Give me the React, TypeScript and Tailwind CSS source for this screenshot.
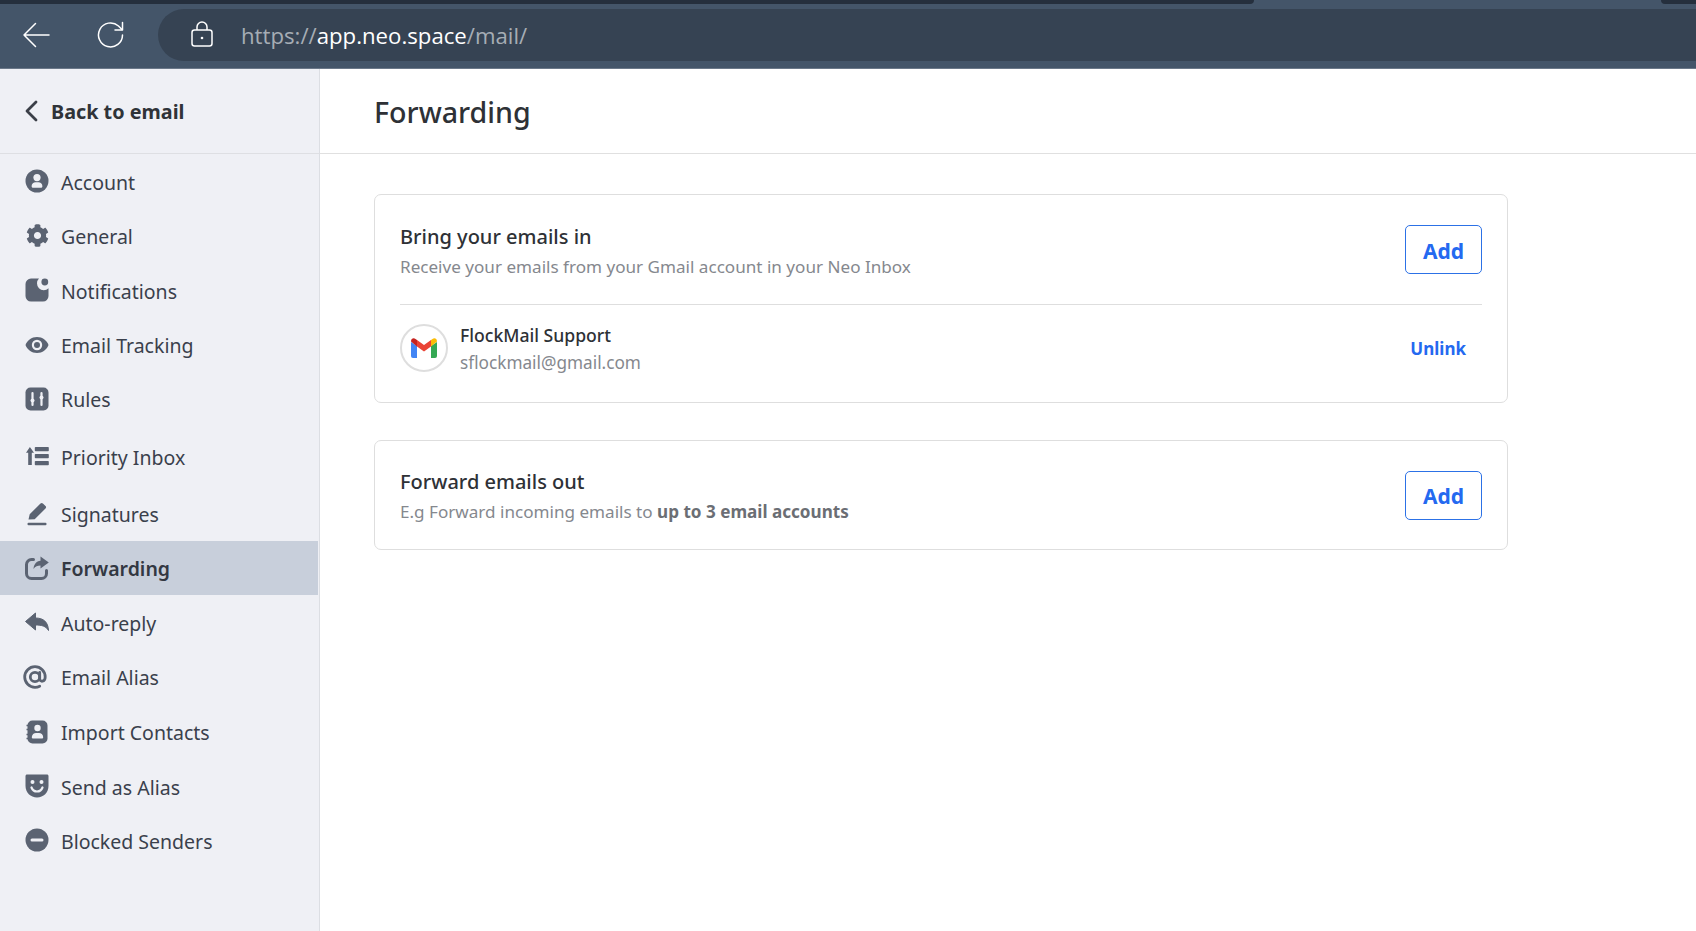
import type { ReactNode } from "react";
import { FaCog } from "react-icons/fa";

const iconColor = "#5b6372";
const sideBg = "#eff0f5";

function Glyph({ children }: { children: ReactNode }) {
  return (
    <svg viewBox="0 0 24 24" className="w-[24px] h-[24px] shrink-0 mb-[3px]" fill={iconColor}>
      {children}
    </svg>
  );
}

const AccountIcon = () => (
  <Glyph>
    <circle cx="12" cy="12" r="11.5" />
    <circle cx="12" cy="8.6" r="3.6" fill={sideBg} />
    <path d="M6.6 17.2c0-2.6 2-4 4-4h2.8c2 0 4 1.4 4 4 0 .9-.8 1.6-1.6 1.6H8.2c-.8 0-1.6-.7-1.6-1.6z" fill={sideBg} />
  </Glyph>
);

const GearIcon = () => (
  <span className="w-[24px] h-[24px] shrink-0 mb-[3px] flex items-center justify-center text-[#5b6372]">
    <FaCog size={23} />
  </span>
);

const BellIcon = () => (
  <Glyph>
    <path d="M14 .6H6A5.5 5.5 0 0 0 .5 6.100v12A5.5 5.500 0 0 0 6 23.600h12a5.500 5.500 0 0 0 5.500-5.500V10.200A6.600 6.600 0 0 1 14 .6z" />
    <circle cx="19.800" cy="4" r="3.400" />
  </Glyph>
);

const EyeIcon = () => (
  <Glyph>
    <path d="M12 4C6.500 4 2.300 7.500.5 12c1.800 4.500 6 8 11.500 8s9.700-3.500 11.500-8C21.700 7.500 17.500 4 12 4z" />
    <circle cx="12" cy="12" r="5.200" fill={sideBg} />
    <circle cx="12" cy="12" r="3" />
  </Glyph>
);

const RulesIcon = () => (
  <Glyph>
    <rect x=".5" y=".5" width="23" height="23" rx="5" />
    <path d="M7.500 11.500V6M7.500 18v-2.500M16.500 18v-5.500M16.500 8.500V6" stroke={sideBg} strokeWidth="2.200" strokeLinecap="round" />
    <circle cx="7.500" cy="13.500" r="2" fill={sideBg} />
    <circle cx="16.500" cy="10.500" r="2" fill={sideBg} />
  </Glyph>
);

const PriorityIcon = () => (
  <Glyph>
    <path d="M4.900 3 9 8.700H6.800V21H3.200V8.700H1z" />
    <rect x="9.800" y="3" width="14" height="4.200" rx=".8" />
    <rect x="9.800" y="10" width="14" height="4.200" rx=".8" />
    <rect x="9.800" y="17" width="14" height="4.200" rx=".8" />
  </Glyph>
);

const PenIcon = () => (
  <Glyph>
    <path d="M3.500 17.500 4.700 12.200 15.500 1.500a1.700 1.700 0 0 1 2.400 0l2.600 2.600a1.700 1.700 0 0 1 0 2.400L9.700 17.300z" />
    <rect x="2.500" y="20.800" width="19" height="2.500" rx="1" />
  </Glyph>
);

const ForwardIcon = () => (
  <Glyph>
    <path d="M8.500 3.500H6.500a5 5 0 0 0-5 5v9a5 5 0 0 0 5 5h10a5 5 0 0 0 5-5v-3" fill="none" stroke={iconColor} strokeWidth="3" strokeLinecap="round" />
    <path d="M15.500.6 23.800 6.500 15.500 12.500V9.500c-3 0-5.200.9-7 3.500.4-4.800 2.800-7.700 7-8.300z" />
  </Glyph>
);

const ReplyIcon = () => (
  <Glyph>
    <path d="M.5 11.500 10.500 3v5c8 0 12.600 4 13 12.500-2.500-4.300-6.500-5.500-13-5.500v5z" stroke={iconColor} strokeWidth="1" strokeLinejoin="round" />
  </Glyph>
);

const AtIcon = () => (
  <svg viewBox="0 0 24 24" className="w-[24px] h-[24px] shrink-0 mb-[3px] -ml-[2px] mr-[2px]" fill="none" stroke={iconColor} strokeWidth="2.800" strokeLinecap="round">
    <circle cx="12" cy="12" r="4.700" />
    <path d="M16.700 7.500v6.300c0 3.600 5.500 3.400 5.500-1.800C22.200 6.400 17.700 1.700 12 1.700 6.300 1.700 1.700 6.300 1.700 12S6.300 22.300 12 22.300c1.800 0 3.300-.4 4.700-1.100" />
  </svg>
);

const ContactsIcon = () => (
  <Glyph>
    <rect x="2.500" y=".5" width="20" height="23" rx="5" />
    <path d="M1.500 5.500h2M1.500 9.500h2M1.500 14.500h2M1.500 18.500h2" stroke={iconColor} strokeWidth="1.400" />
    <circle cx="12.500" cy="8" r="3.200" fill={sideBg} />
    <path d="M6.800 17.200c0-2.800 2.200-4.300 4.200-4.300h3c2 0 4.200 1.500 4.200 4.300 0 .7-.6 1.300-1.300 1.300H8.100c-.7 0-1.300-.6-1.300-1.300z" fill={sideBg} />
  </Glyph>
);

const AliasIcon = () => (
  <Glyph>
    <path d="M2 .6h20c.8 0 1.500.7 1.500 1.500V12c0 6.500-5 11.500-11.500 11.500S.5 18.500.5 12V2.100C.5 1.300 1.200.6 2 .6z" />
    <circle cx="7.500" cy="8" r="2" fill={sideBg} />
    <circle cx="16.500" cy="8" r="2" fill={sideBg} />
    <path d="M6.500 13.500c1 2.600 3 4 5.500 4s4.500-1.400 5.500-4" fill="none" stroke={sideBg} strokeWidth="2.200" strokeLinecap="round" />
  </Glyph>
);

const BlockedIcon = () => (
  <Glyph>
    <circle cx="12" cy="12" r="11.500" />
    <rect x="5.500" y="10.500" width="13" height="3" rx="1.500" fill={sideBg} />
  </Glyph>
);

const navItems = [
  { label: "Account", icon: <AccountIcon />, h: "h-[55px]" },
  { label: "General", icon: <GearIcon />, h: "h-[54px]" },
  { label: "Notifications", icon: <BellIcon />, h: "h-[55px]" },
  { label: "Email Tracking", icon: <EyeIcon />, h: "h-[54px]" },
  { label: "Rules", icon: <RulesIcon />, h: "h-[54px]" },
  { label: "Priority Inbox", icon: <PriorityIcon />, h: "h-[61px]" },
  { label: "Signatures", icon: <PenIcon />, h: "h-[54px]" },
  { label: "Forwarding", icon: <ForwardIcon />, h: "h-[54px]", active: true },
  { label: "Auto-reply", icon: <ReplyIcon />, h: "h-[55px]" },
  { label: "Email Alias", icon: <AtIcon />, h: "h-[54px]" },
  { label: "Import Contacts", icon: <ContactsIcon />, h: "h-[56px]" },
  { label: "Send as Alias", icon: <AliasIcon />, h: "h-[53px]" },
  { label: "Blocked Senders", icon: <BlockedIcon />, h: "h-[55px]" },
];

function BrowserBar() {
  return (
    <div className="relative h-[69px] bg-[#445569] border-b border-[#6b7889] flex items-center pl-[22px] pt-[2px]">
      {/* strip of the tab row above the toolbar */}
      <div className="absolute left-0 top-0 w-[1254px] h-[4px] bg-[#252f3d] rounded-br-[4px]" />
      <div className="absolute right-0 top-0 w-[35px] h-[4px] bg-[#252f3d] rounded-bl-[4px]" />
      <svg viewBox="0 0 28 26" className="w-[28px] h-[26px] shrink-0" fill="none" stroke="#fff" strokeWidth="1.500" strokeLinecap="round" strokeLinejoin="round">
        <path d="M27 13H2M13.500 1.500 2 13l11.500 11.500" />
      </svg>
      <svg viewBox="0 0 28 28" className="w-[28px] h-[28px] shrink-0 ml-[47px]" fill="none" stroke="#fff" strokeWidth="1.500" strokeLinecap="round" strokeLinejoin="round">
        <path d="M25.500 14A12 12 0 1 1 21.500 5l3.500 3.500" />
        <path d="M25.500 1.500v7.500H18" />
      </svg>
      <div className="ml-[33px] flex-1 h-[52px] bg-[#364353] rounded-l-[26px] flex items-center pl-[33px]">
        <svg viewBox="0 0 22 26" className="w-[22px] h-[26px] shrink-0 mb-[2px]" fill="none" stroke="#fff" strokeWidth="1.500" strokeLinejoin="round">
          <rect x="1" y="9" width="20" height="16" rx="2.500" />
          <path d="M6 9V6a5 5 0 0 1 10 0v3" />
          <circle cx="11" cy="17" r="1.300" fill="#fff" stroke="none" />
        </svg>
        <div className="ml-[28px] pt-[2px] text-[22.2px] font-['Open_Sans',sans-serif] text-[#a6adb5] whitespace-nowrap">
          https://<span className="text-white">app.neo.space</span>/mail/
        </div>
      </div>
    </div>
  );
}

function Sidebar() {
  return (
    <aside className="w-[320px] shrink-0 bg-[#eff0f5] border-r border-[#dcdee3]">
      <div className="h-[85px] border-b border-[#dedfe3] pl-[24px] pt-[2px] flex items-center">
        <svg viewBox="0 0 14 22" className="w-[14px] h-[22px] shrink-0 mb-[2px]" fill="none" stroke="#3b3f48" strokeWidth="2.800" strokeLinecap="round" strokeLinejoin="round">
          <path d="M12 2 3 11l9 9" />
        </svg>
        <span className="ml-[13px] text-[19.800px] font-bold text-[#2f3338]">Back to email</span>
      </div>
      <nav className="pr-px">
        {navItems.map((item) => (
          <div
            key={item.label}
            className={`${item.h} flex items-center pl-[25px] pt-[2px] gap-[12px] text-[19.500px] ${item.active ? "bg-[#c8cfdb] font-semibold text-[#333842]" : "text-[#3a404c]"}`}
          >
            {item.icon}
            <span>{item.label}</span>
          </div>
        ))}
      </nav>
    </aside>
  );
}

function AddButton() {
  return (
    <button className="w-[77px] h-[49px] shrink-0 border border-[#2c71e6] rounded-[5px] bg-white pt-[4px] text-[21px] font-bold text-[#2469f0]">
      Add
    </button>
  );
}

function GmailLogo() {
  return (
    <svg viewBox="0 0 26 20" className="w-[26px] h-[20px]">
      <path d="M0 4v14a2 2 0 0 0 2 2h4V8z" fill="#4285f4" />
      <path d="M26 4v14a2 2 0 0 1-2 2h-4V8z" fill="#34a853" />
      <path d="M6 8.500 13 13.500l7-5V2L13 7 6 2z" fill="#ea4335" />
      <path d="M0 3.500 6 8.500V2L4.500 1C2.500-.6 0 .8 0 3.500z" fill="#c5221f" />
      <path d="M26 3.500 20 8.500V2l1.500-1C23.500-.6 26 .8 26 3.500z" fill="#fbbc04" />
    </svg>
  );
}

export default function App() {
  return (
    <div className="h-[931px] overflow-hidden bg-white flex flex-col font-['Noto_Sans',sans-serif]">
      <BrowserBar />
      <div className="flex flex-1 min-h-0">
        <Sidebar />
        <main className="flex-1">
          <div className="h-[85px] border-b border-[#e0e0e0] pl-[54px] pt-[2px] flex items-center">
            <h1 className="text-[28.600px] font-medium text-[#2e3136]">Forwarding</h1>
          </div>
          <div className="pt-[40px] pl-[54px] w-[1188px] flex flex-col gap-[37px]">
            <section className="border border-[#dedede] rounded-[7px] px-[25px]">
              <div className="h-[110px] flex items-center justify-between border-b border-[#dedede]">
                <div className="pt-[4px]">
                  <h2 className="text-[20px] leading-[30px] font-medium text-[#2e3136]">Bring your emails in</h2>
                  <p className="text-[17.100px] leading-[30px] text-[#85888e]">Receive your emails from your Gmail account in your Neo Inbox</p>
                </div>
                <AddButton />
              </div>
              <div className="h-[97px] flex items-center pb-[12px]">
                <div className="w-[48px] h-[48px] rounded-full border-2 border-[#dedede] flex items-center justify-center">
                  <GmailLogo />
                </div>
                <div className="ml-[12px] pt-[3px] flex-1">
                  <div className="text-[17.600px] leading-[27px] font-medium text-[#2e3136]">FlockMail Support</div>
                  <div className="text-[17.200px] leading-[27px] text-[#85888e]">sflockmail@gmail.com</div>
                </div>
                <button className="mr-[16px] pt-[2px] text-[17px] font-bold text-[#2469f0]">Unlink</button>
              </div>
            </section>
            <section className="h-[110px] border border-[#dedede] rounded-[7px] px-[25px] flex items-center justify-between">
              <div className="pt-[4px]">
                <h2 className="text-[20px] leading-[30px] font-medium text-[#2e3136]">Forward emails out</h2>
                <p className="text-[17.100px] leading-[30px] text-[#85888e]">
                  E.g Forward incoming emails to <span className="font-bold text-[#6b6e74]">up to 3 email accounts</span>
                </p>
              </div>
              <AddButton />
            </section>
          </div>
        </main>
      </div>
    </div>
  );
}
